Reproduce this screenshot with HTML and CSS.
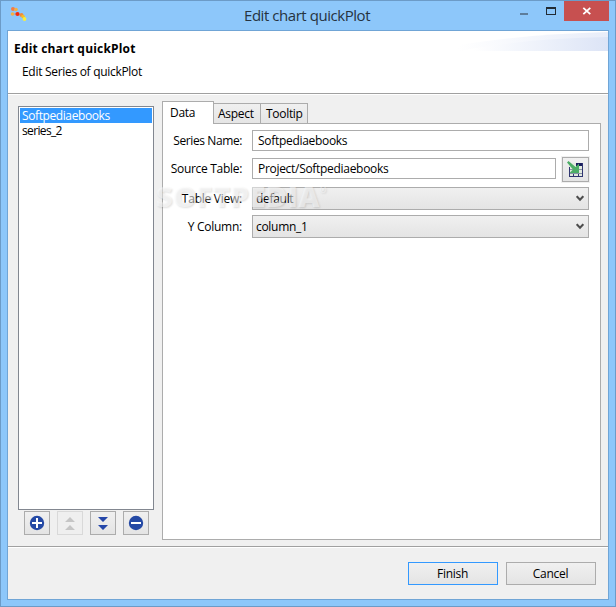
FILE: index.html
```html
<!DOCTYPE html>
<html lang="en">
<head>
<meta charset="utf-8">
<title>Edit chart quickPlot</title>
<link rel="stylesheet" href="styles.css">
</head>
<body>
<div class="window">
  <header class="titlebar">
    <svg class="app-icon" width="17" height="15" viewBox="0 0 17 15"><path d="M2 2h5M2 7h6l5 2 2 3" stroke="#b69ca5" fill="none"/><circle cx="3" cy="2" r="2" fill="#f47b45"/><circle cx="6" cy="2.5" r="1.8" fill="#f5b044"/><circle cx="2.5" cy="7" r="1.8" fill="#f5b044"/><circle cx="7.5" cy="7" r="2.1" fill="#f52a0c"/><circle cx="11.500" cy="8" r="2" fill="#f08b3c"/><circle cx="13" cy="9.500" r="1.8" fill="#f6bd28"/><circle cx="14.500" cy="12" r="1.9" fill="#f8ef3c"/></svg>
    <h1><span>Edit chart quickPlot</span></h1>
    <div class="controls">
      <svg width="44" height="20" viewBox="0 0 44 20" shape-rendering="crispEdges"><path d="M0 12h8v2H0z" fill="#5d7d9b"/><path fill="#222b34" fill-rule="evenodd" d="M26 6h10v8H26zm1 2v5h8V8z"/></svg>
      <div class="close"><svg width="10" height="8" viewBox="0 0 10 8"><path d="M1.300 .8l7 6.400M8.300 .8l-7 6.400" stroke="#fff" stroke-width="1.8"/></svg></div>
    </div>
  </header>
  <main class="client">
    <section class="banner">
      <svg class="swoosh" width="150" height="20" viewBox="0 0 150 20"><defs><linearGradient id="g"><stop offset="0" stop-color="#fff"/><stop offset="1" stop-color="#e8edf9"/></linearGradient><linearGradient id="h"><stop offset="0.1" stop-color="#fff"/><stop offset="1" stop-color="#dce4f6"/></linearGradient></defs><path d="M0 20V14Q70 3 150 1v19z" fill="url(#g)"/><path d="M0 20Q70 7 150 6v14z" fill="url(#h)"/></svg>
      <h2><span>Edit chart quickPlot</span></h2>
      <p><span>Edit Series of quickPlot</span></p>
    </section>
    <section class="body">
      <aside class="side">
        <ul class="list"><li class="selected"><span>Softpediaebooks</span></li><li><span>series_2</span></li></ul>
        <div class="tools">
          <button aria-label="Add"><svg width="16" height="16" viewBox="0 0 16 16"><circle cx="8" cy="8" r="7.2" fill="#2449a5"/><path d="M3 8h10M8 3v10" stroke="#fff" stroke-width="2"/></svg></button>
          <button class="disabled" aria-label="Move up"><svg width="16" height="16" viewBox="0 0 16 16"><path d="M3 7h10L8 2zM3 15h10l-5-5z" fill="#c5c5c5"/></svg></button>
          <button aria-label="Move down"><svg width="16" height="16" viewBox="0 0 16 16"><path d="M3 2h10L8 7zM3 10h10l-5 5z" fill="#2547a9"/></svg></button>
          <button aria-label="Remove"><svg width="16" height="16" viewBox="0 0 16 16"><circle cx="8" cy="8" r="7.2" fill="#2449a5"/><path d="M3 8h10" stroke="#fff" stroke-width="2"/></svg></button>
        </div>
      </aside>
      <div class="tabs">
        <nav><div class="tab active"><span>Data</span></div><div class="tab"><span>Aspect</span></div><div class="tab last"><span>Tooltip</span></div></nav>
        <form class="panel">
          <div class="row"><label><span>Series Name:</span></label><div class="field"><span>Softpediaebooks</span></div></div>
          <div class="row browse-row"><label><span>Source Table:</span></label><div class="field"><span>Project/Softpediaebooks</span></div>
            <button type="button" class="browse" aria-label="Choose table"><svg width="17" height="17" viewBox="0 0 17 17"><g shape-rendering="crispEdges"><path d="M2 2h14v14H2z" fill="#e2eadf"/><path d="M9 2h7v3H9z" fill="#191d5c"/><path d="M2 6h1v10H2zM6 11h1v5H6zM11 4h1v12h-1zM15 2h1v14h-1zM2 15h14v1H2z" fill="#303571"/><path d="M3 8h12v1H3zM3 12h12v1H3z" fill="#8790a5"/></g><path d="M0 1.500L1.500 0l7 6L12 2.500V12H2.500L6 8.500z" fill="#4cae66"/></svg></button></div>
          <div class="row select-row"><label><span>Table View:</span></label><div class="field select"><span>default</span><svg width="8" height="7" viewBox="0 0 8 7"><path d="M.7 1.200L4 4.700l3.300-3.500" fill="none" stroke="#4d4d4d" stroke-width="2"/></svg></div></div>
          <div class="row select-row"><label><span>Y Column:</span></label><div class="field select"><span>column_1</span><svg width="8" height="7" viewBox="0 0 8 7"><path d="M.7 1.200L4 4.700l3.300-3.500" fill="none" stroke="#4d4d4d" stroke-width="2"/></svg></div></div>
        </form>
      </div>
    </section>
    <footer><button class="primary"><span>Finish</span></button><button><span>Cancel</span></button></footer>
  </main>
  <div class="watermark">SOFTPEDIA<sup>®</sup></div>
</div>
</body>
</html>
```

FILE: styles.css
```css
* { box-sizing: border-box; }
body { margin: 0; font: 12px/15px "Open Sans", "Noto Sans", sans-serif; color: #000; letter-spacing: -0.3px; }
h1, h2, p, ul { margin: 0; padding: 0; list-style: none; }
svg { display: block; flex: none; }
span { white-space: nowrap; }
button { display: flex; align-items: center; justify-content: center; padding: 0; border: 1px solid #acacac; background: linear-gradient(#f0f0f0, #e4e4e4); font: inherit; letter-spacing: inherit; color: #000; }
.window { position: relative; width: 616px; height: 607px; padding: 0 6px 6px; border: 1px solid #6c9bc7; background: #8dc7fa; }
.titlebar { display: flex; height: 29px; padding-left: 3px; }
.app-icon { margin-top: 6px; }
h1 { flex: 1; padding: 4px 0 0 217px; font-size: 15px; line-height: 21px; font-weight: 400; letter-spacing: -0.45px; color: #26333f; }
.controls { display: flex; }
.close { display: flex; align-items: center; justify-content: center; width: 45px; height: 20px; background: #c75050; }
.client { display: flex; flex-direction: column; height: 570px; border: 1px solid #70a5d6; background: #f0f0f0; }
.banner { position: relative; height: 64px; padding: 9px 0 0 6px; background: #fff; border-bottom: 1px solid #a0a0a0; }
.swoosh { position: absolute; top: 0; right: 0; }
h2 { font-size: 12px; line-height: 17px; font-weight: 700; letter-spacing: 0.18px; }
p { padding: 7px 0 0 8px; }
.body { display: flex; flex: 1; padding: 6px 7px 6px 10px; border-top: 1px solid #fff; border-bottom: 1px solid #a0a0a0; }
.side { width: 136px; margin-right: 8px; padding-top: 5px; }
.list { height: 404px; padding: 1px; border: 1px solid #828790; background: #fff; }
.list li { height: 15px; padding-left: 2px; letter-spacing: -0.4px; }
.list .selected { background: #3399ff; color: #fff; }
.list li + li { letter-spacing: -0.65px; }
.tools { display: flex; gap: 7px; padding: 1px 0 0 6px; }
.tools button { width: 26px; height: 24px; }
.tools .disabled { border-color: #d9d9d9; background: #efefef; }
.tabs { flex: 1; }
nav { display: flex; align-items: flex-end; height: 22px; }
.tab { height: 20px; width: 48px; margin-right: -1px; padding: 2px 0 0 4px; border: 1px solid #acacac; border-bottom: 0; background: linear-gradient(#f0f0f0, #e5e5e5); }
.tab.last { padding-left: 5px; }
.tab.active { position: relative; width: 52px; height: 23px; margin-bottom: -1px; padding: 3px 0 0 7px; background: #fff; z-index: 1; }
.panel { display: flex; flex-direction: column; height: 417px; padding: 6px 11px; border: 1px solid #acacac; background: #fff; }
.row { display: flex; height: 21px; margin: 0 0 6px -4px; }
.row label { display: flex; align-items: center; justify-content: flex-end; width: 72px; height: 21px; margin-right: 10px; letter-spacing: -0.4px; }
.field { display: flex; flex: 1; align-items: center; height: 21px; padding: 0 5px; border: 1px solid #acacac; }
.browse-row { height: 25px; margin-bottom: 5px; }
.browse-row label, .browse-row .field { margin-top: 1px; }
.browse-row label { letter-spacing: -0.3px; }
.browse { width: 27px; height: 25px; margin-left: 6px; outline: 1px solid #f0f0f0; }
.select-row { height: 23px; margin-bottom: 5px; }
.select-row label { height: 23px; letter-spacing: -0.25px; }
.select { height: 23px; padding: 0 4px 0 3px; justify-content: space-between; background: linear-gradient(#f0f0f0, #e4e4e4); }
footer { display: flex; justify-content: flex-end; align-items: flex-start; gap: 8px; height: 52px; padding: 14px 12px 0; border-top: 1px solid #fff; }
footer button { width: 90px; height: 23px; padding-right: 1px; }
footer .primary { border-color: #3399ff; }
.watermark { position: absolute; left: 155px; top: 180px; font: 800 29px/30px "Open Sans", sans-serif; letter-spacing: 0.5px; color: rgba(255,255,255,.5); text-shadow: 1px 1px 2px rgba(0,0,0,.12); pointer-events: none; white-space: nowrap; }
.watermark sup { font-size: 8px; line-height: 0; vertical-align: 14px; }
```
